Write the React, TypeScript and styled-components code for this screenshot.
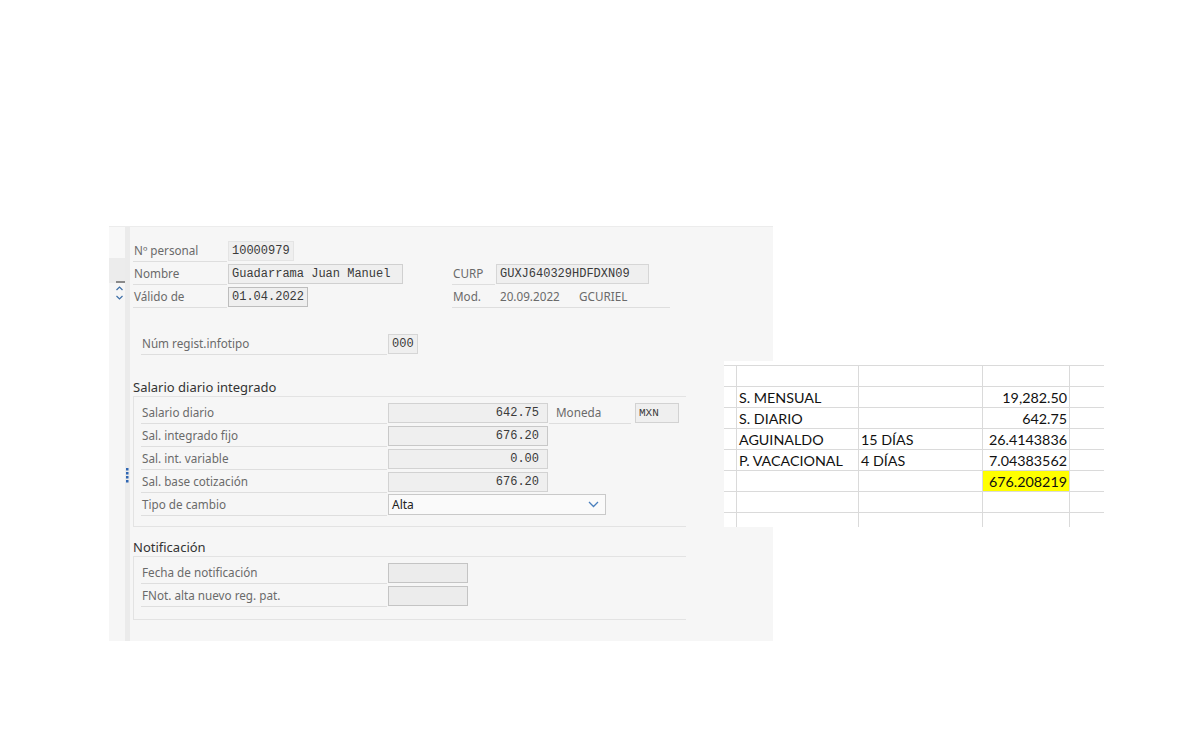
import React from "react";
import styled, { createGlobalStyle } from "styled-components";

const Global = createGlobalStyle`
  html, body { margin: 0; padding: 0; background: #ffffff; }
  body { font-family: "Noto Sans", "Liberation Sans", sans-serif; }
`;

const Canvas = styled.div`
  position: relative;
  width: 1200px;
  height: 750px;
  padding: 226px 0 0 109px;
  box-sizing: border-box;
`;

const Panel = styled.div`
  width: 664px;
  height: 415px;
  background: #f6f6f6;
  border-top: 1px solid #ececec;
  box-sizing: border-box;
  display: grid;
  grid-template-columns: 16px 5px 1fr;
`;

const Side = styled.div`
  display: flex;
  flex-direction: column;
`;

const SideTop = styled.div`
  height: 31px;
  background: #f8f8f8;
`;

const SideBand = styled.div`
  height: 25px;
  background: #ececec;
  display: flex;
  align-items: flex-end;
  justify-content: flex-end;
  &::after {
    content: "";
    width: 9px;
    height: 2px;
    background: #8a8a8a;
  }
`;

const SideIcon = styled.div`
  height: 20px;
  display: flex;
  justify-content: center;
  align-items: center;
  padding-left: 4px;
`;

const SideRest = styled.div`
  flex: 1;
  background: #f6f6f6;
`;

const Splitter = styled.div`
  background: #ebebeb;
  display: flex;
  align-items: flex-start;
  justify-content: center;
  padding-top: 240px;
  box-sizing: border-box;
`;

const Content = styled.div`
  padding: 12px 0 0 3px;
  display: flex;
  flex-direction: column;
`;

const HeaderGrid = styled.div`
  display: flex;
`;

const HeaderCol = styled.div<{ $w: number; $ml?: number }>`
  width: ${(p) => p.$w}px;
  margin-left: ${(p) => p.$ml ?? 0}px;
  display: flex;
  flex-direction: column;
`;

const Row = styled.div<{ $spacer?: boolean }>`
  height: 23px;
  display: flex;
  align-items: center;
  visibility: ${(p) => (p.$spacer ? "hidden" : "visible")};
`;

const Label = styled.div<{ $w: number; $pl?: number; $ml?: number }>`
  width: ${(p) => p.$w}px;
  height: 23px;
  margin-left: ${(p) => p.$ml ?? 0}px;
  box-sizing: border-box;
  padding-left: ${(p) => p.$pl ?? 1}px;
  border-bottom: 1px solid #dedede;
  display: flex;
  align-items: center;
  font-size: 11.7px;
  color: #6a6a6a;
  white-space: nowrap;
  flex-shrink: 0;
`;

const Field = styled.div<{
  $w: number;
  $align?: "left" | "right";
  $bg?: string;
  $border?: string;
  $fs?: number;
  $ml?: number;
}>`
  width: ${(p) => p.$w}px;
  height: 20px;
  margin-left: ${(p) => p.$ml ?? 1}px;
  box-sizing: border-box;
  background: ${(p) => p.$bg ?? "#efefef"};
  border: 1px solid ${(p) => p.$border ?? "#d2d2d2"};
  display: flex;
  align-items: center;
  justify-content: ${(p) => (p.$align === "right" ? "flex-end" : "flex-start")};
  padding: 0 8px 0 3px;
  font-family: "Liberation Mono", "DejaVu Sans Mono", monospace;
  font-size: ${(p) => p.$fs ?? 12}px;
  color: #3a3a3a;
  white-space: nowrap;
  flex-shrink: 0;
`;

const PlainText = styled.span<{ $w: number }>`
  display: inline-block;
  width: ${(p) => p.$w}px;
  font-size: 11.7px;
  color: #6a6a6a;
`;

const ModLabel = styled.div`
  width: 218px;
  height: 23px;
  box-sizing: border-box;
  border-bottom: 1px solid #dedede;
  display: flex;
  align-items: center;
  padding-left: 1px;
`;

const RegRow = styled(Row)`
  margin-top: 24px;
  padding-left: 8px;
`;

const SectionTitle = styled.div<{ $mt: number }>`
  margin-top: ${(p) => p.$mt}px;
  height: 18px;
  display: flex;
  align-items: center;
  font-size: 13px;
  color: #333333;
`;

const Group = styled.div<{ $pt: number; $pb: number }>`
  width: 553px;
  box-sizing: border-box;
  border: 1px solid #e3e3e3;
  border-right: none;
  padding: ${(p) => p.$pt}px 0 ${(p) => p.$pb}px 7px;
  display: flex;
  flex-direction: column;
`;

const Select = styled.div`
  width: 218px;
  height: 21px;
  margin-left: 1px;
  box-sizing: border-box;
  background: #fafafa;
  border: 1px solid #c9c9c9;
  display: flex;
  align-items: center;
  justify-content: space-between;
  padding: 0 6px 0 3px;
  font-size: 12px;
  color: #222;
`;

const Sheet = styled.div`
  position: absolute;
  left: 724px;
  top: 361px;
  width: 380px;
  height: 166px;
  background: #ffffff;
  padding-top: 4px;
  box-sizing: border-box;
  overflow: hidden;
`;

const SheetRow = styled.div`
  display: grid;
  grid-template-columns: 13px 122px 124px 87px 34px;
  height: 21px;
  border-top: 1px solid #dadada;
  box-sizing: border-box;
`;

const Cell = styled.div<{ $right?: boolean; $hl?: boolean; $line?: boolean }>`
  border-right: ${(p) => (p.$line ? "1px solid #dadada" : "none")};
  background: ${(p) => (p.$hl ? "#ffff00" : "transparent")};
  display: flex;
  align-items: center;
  justify-content: ${(p) => (p.$right ? "flex-end" : "flex-start")};
  padding: ${(p) => (p.$right ? "1px 2px 0 0" : "1px 0 0 2px")};
  font-family: "Lato", "Open Sans", sans-serif;
  font-size: 14.3px;
  color: #111111;
  white-space: nowrap;
  box-sizing: border-box;
`;

const sheetData: [string, string, string, boolean][] = [
  ["", "", "", false],
  ["S. MENSUAL", "", "19,282.50", false],
  ["S. DIARIO", "", "642.75", false],
  ["AGUINALDO", "15 DÍAS", "26.4143836", false],
  ["P. VACACIONAL", "4 DÍAS", "7.04383562", false],
  ["", "", "676.208219", true],
  ["", "", "", false],
  ["", "", "", false],
];

const Chevrons = () => (
  <svg width="9" height="18" viewBox="0 0 9 18">
    <path d="M1.5 6 L4.5 3 L7.5 6" fill="none" stroke="#3d6fa8" strokeWidth="1.2" />
    <path d="M1.5 12 L4.5 15 L7.5 12" fill="none" stroke="#3d6fa8" strokeWidth="1.2" />
  </svg>
);

const Dots = () => (
  <svg width="3" height="16" viewBox="0 0 3 16">
    {[1, 5, 9, 13].map((y) => (
      <rect key={y} x="0" y={y} width="2.5" height="2.5" fill="#2f66b3" />
    ))}
  </svg>
);

const ChevronDown = () => (
  <svg width="11" height="7" viewBox="0 0 11 7">
    <path d="M1 1 L5.5 5.5 L10 1" fill="none" stroke="#4a7fbd" strokeWidth="1.3" />
  </svg>
);

export default function App() {
  return (
    <Canvas>
      <Global />
      <Panel>
        <Side>
          <SideTop />
          <SideBand />
          <SideIcon>
            <Chevrons />
          </SideIcon>
          <SideRest />
        </Side>
        <Splitter>
          <Dots />
        </Splitter>
        <Content>
          <HeaderGrid>
            <HeaderCol $w={320}>
              <Row>
                <Label $w={94}>Nº personal</Label>
                <Field $w={66} $border="#e4e4e4">10000979</Field>
              </Row>
              <Row>
                <Label $w={94}>Nombre</Label>
                <Field $w={175} $border="#d0d0d0">Guadarrama Juan Manuel</Field>
              </Row>
              <Row>
                <Label $w={94}>Válido de</Label>
                <Field $w={80} $border="#bdbdbd">01.04.2022</Field>
              </Row>
            </HeaderCol>
            <HeaderCol $w={220} $ml={-1}>
              <Row $spacer />
              <Row>
                <Label $w={43} $pl={1}>CURP</Label>
                <Field $w={153} $border="#d6d6d6">GUXJ640329HDFDXN09</Field>
              </Row>
              <Row>
                <ModLabel>
                  <PlainText $w={47}>Mod.</PlainText>
                  <PlainText $w={79}>20.09.2022</PlainText>
                  <PlainText $w={80}>GCURIEL</PlainText>
                </ModLabel>
              </Row>
            </HeaderCol>
          </HeaderGrid>

          <RegRow>
            <Label $w={246}>Núm regist.infotipo</Label>
            <Field $w={30} $border="#d6d6d6">000</Field>
          </RegRow>

          <SectionTitle $mt={23}>Salario diario integrado</SectionTitle>
          <Group $pt={4} $pb={10}>
            <Row>
              <Label $w={246}>Salario diario</Label>
              <Field $w={160} $align="right">642.75</Field>
              <Label $w={82} $pl={7} $ml={1}>Moneda</Label>
              <Field $w={44} $ml={4} $fs={11}>MXN</Field>
            </Row>
            <Row>
              <Label $w={246}>Sal. integrado fijo</Label>
              <Field $w={160} $align="right" $border="#c8c8c8">676.20</Field>
            </Row>
            <Row>
              <Label $w={246}>Sal. int. variable</Label>
              <Field $w={160} $align="right">0.00</Field>
            </Row>
            <Row>
              <Label $w={246}>Sal. base cotización</Label>
              <Field $w={160} $align="right">676.20</Field>
            </Row>
            <Row>
              <Label $w={246}>Tipo de cambio</Label>
              <Select>
                <span>Alta</span>
                <ChevronDown />
              </Select>
            </Row>
          </Group>

          <SectionTitle $mt={11}>Notificación</SectionTitle>
          <Group $pt={4} $pb={12}>
            <Row>
              <Label $w={246}>Fecha de notificación</Label>
              <Field $w={80} $bg="#ececec" $border="#c4c4c4" />
            </Row>
            <Row>
              <Label $w={246}>FNot. alta nuevo reg. pat.</Label>
              <Field $w={80} $bg="#ececec" $border="#c4c4c4" />
            </Row>
          </Group>
        </Content>
      </Panel>

      <Sheet>
        {sheetData.map(([a, b, c, hl], i) => (
          <SheetRow key={i}>
            <Cell $line />
            <Cell $line>{a}</Cell>
            <Cell $line>{b}</Cell>
            <Cell $line $right $hl={hl}>{c}</Cell>
            <Cell />
          </SheetRow>
        ))}
      </Sheet>
    </Canvas>
  );
}
